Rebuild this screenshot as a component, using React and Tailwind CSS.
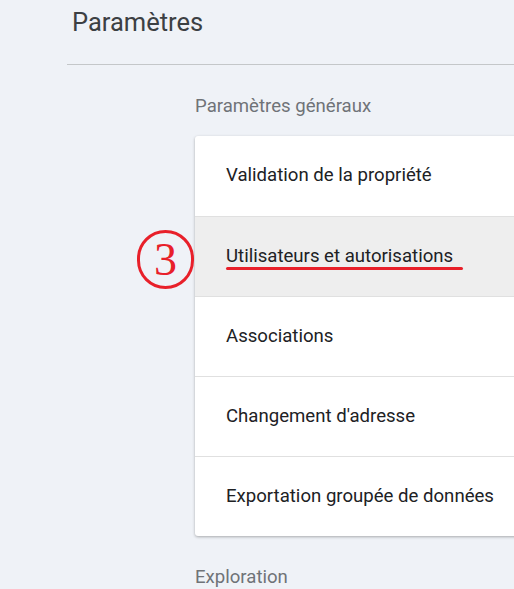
import React from 'react';

const items = [
  'Validation de la propriété',
  'Utilisateurs et autorisations',
  'Associations',
  "Changement d'adresse",
  'Exportation groupée de données',
];

const App = () => {
  return (
    <div className="w-[514px] h-[589px] overflow-hidden bg-[#eff2f7] font-['Roboto',sans-serif]">
      {/* Header */}
      <div className="pl-[72px] pt-[6px] h-[64px]">
        <h1 className="text-[25.5px] leading-[32px] text-[#3c4043] font-normal">Paramètres</h1>
      </div>
      <div className="ml-[67px] border-t border-[#c4c7c9]" />

      {/* Section */}
      <div className="pl-[195px]">
        <p className="mt-[30px] text-[18.6px] leading-[22px] text-[#6f7378]">Paramètres généraux</p>
        <div className="mt-[19px] w-[340px] bg-white rounded-l-[3px] shadow-[0_1px_3px_rgba(0,0,0,0.3)]">
          {items.map((label, i) => (
            <div
              key={label}
              className={`relative h-[80px] flex items-center pl-[31px] text-[18.6px] text-[#202124] ${i > 0 ? 'border-t border-[#e0e0e0]' : ''} ${i === 1 ? 'bg-[#eeeeee]' : ''}`}
            >
              {label}
              {i === 1 && (
                <>
                  <span className="absolute left-[31px] top-[50px] w-[237px] h-[3px] rounded-full bg-[#e8202a]" />
                  <span className="absolute left-[-58px] top-[13px] w-[57px] h-[59px] rounded-full border-[3.5px] border-[#e8202a] flex items-center justify-center text-[#e8202a] text-[46px] leading-none font-['Liberation_Serif',serif]">
                    3
                  </span>
                </>
              )}
            </div>
          ))}
        </div>
        <p className="mt-[30px] text-[18.6px] leading-[22px] text-[#6f7378]">Exploration</p>
      </div>
    </div>
  );
};

export default App;
